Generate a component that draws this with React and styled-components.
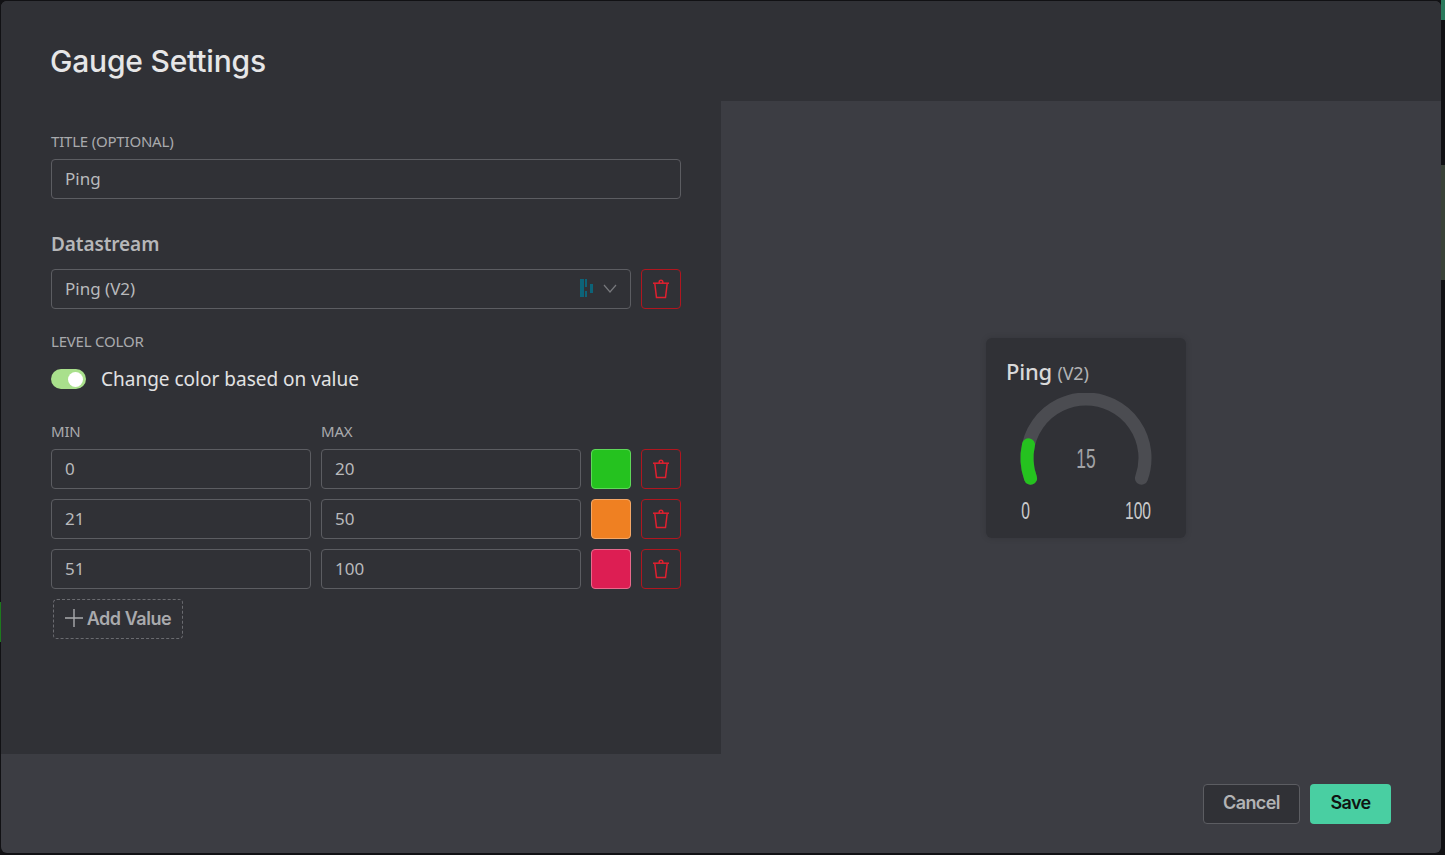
import React from "react";
import styled, { createGlobalStyle } from "styled-components";

const GlobalStyle = createGlobalStyle`
  html, body {
    margin: 0;
    padding: 0;
    background: #111114;
    overflow: hidden;
  }
  * {
    box-sizing: border-box;
  }
`;

const Page = styled.div`
  width: 1445px;
  height: 855px;
  padding: 1px 4px 2px 1px;
  position: relative;
`;

// bits of the page behind the dialog that stick out at its edges
const BehindDialog = styled.div`
  position: absolute;
  top: ${(p) => p.$top}px;
  height: ${(p) => p.$height}px;
  ${(p) => (p.$left ? "left: 0; width: 1px;" : "right: 0; width: 4px;")}
  background: ${(p) => p.$color};
`;

const Modal = styled.div`
  position: relative;
  height: 852px;
  display: grid;
  grid-template-rows: 100px 653px 99px;
  grid-template-columns: 720px 720px;
  background: #3c3d43;
  border-radius: 6px;
  overflow: hidden;
  font-family: "Noto Sans", "Open Sans", sans-serif;
`;

const Header = styled.header`
  grid-column: 1 / 3;
  background: #303136;
  padding: 40px 49px 0;
`;

const Title = styled.h1`
  margin: 0;
  font-family: Inter, "Noto Sans", sans-serif;
  font-size: 30px;
  line-height: 40px;
  font-weight: 500;
  letter-spacing: -0.2px;
  color: #e6e6e7;
`;

const FormPanel = styled.section`
  background: #303136;
  padding: 31px 40px 0 50px;
  display: flex;
  flex-direction: column;
`;

const Label = styled.div`
  font-size: 15px;
  line-height: 18px;
  padding-bottom: 2px;
  letter-spacing: -0.2px;
  color: #a9aaad;
  text-transform: uppercase;
`;

const Field = styled.div`
  height: 40px;
  border: 1px solid #5c5d62;
  border-radius: 4px;
  padding: 0 13px 2px;
  display: flex;
  align-items: center;
  font-size: 17px;
  color: #b9babc;
  flex: ${(p) => (p.$grow ? "1" : "none")};
  width: ${(p) => p.$width || "auto"};
`;

const TitleField = styled(Field)`
  margin-top: 7px;
`;

const SectionHeading = styled.h2`
  margin: 33px 0 13px;
  font-size: 19px;
  line-height: 24px;
  font-weight: 600;
  letter-spacing: -0.1px;
  color: #b6b7b9;
`;

const Row = styled.div`
  display: flex;
  gap: 10px;
  margin-bottom: 10px;
`;

const StreamMeta = styled.span`
  margin-left: auto;
  display: flex;
  align-items: center;
  gap: 10px;
`;

const LevelLabel = styled(Label)`
  margin-top: 13px;
`;

const ToggleRow = styled.div`
  margin-top: 15px;
  display: flex;
  align-items: center;
  gap: 15px;
  font-size: 19px;
  line-height: 24px;
  color: #e2e2e3;
`;

const Track = styled.span`
  width: 35px;
  height: 20px;
  border-radius: 10px;
  background: #a9e08c;
  display: flex;
  align-items: center;
  justify-content: flex-end;
  padding-right: 3px;
`;

const Knob = styled.span`
  width: 15px;
  height: 15px;
  border-radius: 50%;
  background: #fff;
`;

const ColumnLabels = styled.div`
  margin-top: 31px;
  margin-bottom: 7px;
  display: flex;
  gap: 10px;
`;

const ColumnLabel = styled(Label)`
  width: 260px;
`;

const Swatch = styled.div`
  width: 40px;
  height: 40px;
  border-radius: 4px;
  background: ${(p) => p.$color};
  border: 1px solid ${(p) => p.$edge};
`;

const TrashButton = styled.button`
  width: 40px;
  height: 40px;
  padding: 0;
  background: transparent;
  border: 1px solid #b0161f;
  border-radius: 4px;
  display: flex;
  align-items: center;
  justify-content: center;
`;

const AddButton = styled.button`
  width: 130px;
  height: 40px;
  margin-left: 2px;
  border: 1px dashed #6a6b70;
  border-radius: 4px;
  background: transparent;
  display: flex;
  align-items: center;
  justify-content: center;
  gap: 4px;
  padding: 0 0 2px;
  font-family: Inter, "Noto Sans", sans-serif;
  font-size: 18px;
  font-weight: 600;
  letter-spacing: -0.45px;
  color: #a9aaad;
`;

const PreviewPanel = styled.section`
  display: flex;
  align-items: center;
  justify-content: center;
  padding: 21px 0 0 10px;
`;

const GaugeCard = styled.div`
  width: 200px;
  height: 200px;
  border-radius: 6px;
  background: #303136;
  box-shadow: 0 0 6px rgba(0, 0, 0, 0.14);
  padding: 19px 20px 0;
`;

const GaugeTitle = styled.div`
  font-size: 22px;
  font-weight: 500;
  line-height: 28px;
  letter-spacing: -0.2px;
  color: #d9d9da;
`;

const GaugeStream = styled.span`
  font-size: 18px;
  font-weight: 400;
  color: #b2b3b5;
`;

const GaugeBody = styled.div`
  position: relative;
  width: 160px;
  margin-top: 6px;
`;

const GaugeValue = styled.div`
  position: absolute;
  left: 0;
  right: 0;
  top: 50px;
  text-align: center;
  font-family: "Liberation Sans", sans-serif;
  font-size: 28px;
  line-height: 32px;
  color: #a2a3a6;
  transform: scaleX(0.62);
`;

const GaugeScale = styled.div`
  display: flex;
  justify-content: space-between;
  padding: 0 8px 0 13px;
  margin-top: 6px;
  font-family: "Liberation Sans", sans-serif;
  font-size: 24px;
  line-height: 26px;
  color: #c9cacb;
`;

const ScaleValue = styled.span`
  display: inline-block;
  transform: scaleX(0.65);
`;

const Footer = styled.footer`
  grid-column: 1 / 3;
  display: flex;
  justify-content: flex-end;
  gap: 10px;
  padding: 30px 50px 0 0;
`;

const FooterButton = styled.button`
  height: 40px;
  padding: 0 0 4px;
  border-radius: 4px;
  font-family: Inter, "Noto Sans", sans-serif;
  font-size: 18px;
  font-weight: 600;
  letter-spacing: -0.6px;
`;

const CancelButton = styled(FooterButton)`
  width: 97px;
  background: #303136;
  border: 1px solid #5c5d62;
  color: #b2b3b5;
`;

const SaveButton = styled(FooterButton)`
  width: 81px;
  background: #49cfa2;
  border: none;
  color: #101512;
`;

const TrashIcon = () => (
  <svg width="18" height="20" viewBox="0 0 18 20" fill="none" stroke="#e0202f" strokeWidth="1.5">
    <path d="M1 4.2h16" />
    <path d="M2.8 4.5 4.5 18.5h9l1.7-14" />
    <path d="M7.2 4V3a1.8 1.8 0 0 1 3.6 0v1" />
  </svg>
);

const StreamIcon = () => (
  <svg width="13" height="18" viewBox="0 0 13 18" fill="#0d6378">
    <rect x="0" y="0" width="4" height="18" />
    <rect x="5" y="0" width="2" height="8" />
    <rect x="5" y="12" width="2" height="6" />
    <rect x="10" y="5" width="3" height="9" />
  </svg>
);

const ChevronIcon = () => (
  <svg width="14" height="9" viewBox="0 0 14 9" fill="none" stroke="#77787c" strokeWidth="1.2">
    <path d="M1 1l6 7 6-7" />
  </svg>
);

const PlusIcon = () => (
  <svg width="18" height="18" viewBox="0 0 18 18" stroke="#a9aaad" strokeWidth="1.4">
    <path d="M9 0v18M0 9h18" />
  </svg>
);

// 220 degree arc, centre 65/65 radius 59
const polar = (deg) => {
  const a = ((deg - 90) * Math.PI) / 180;
  return [65 + 59 * Math.cos(a), 65 + 59 * Math.sin(a)];
};
const arc = (from, to) => {
  const [x1, y1] = polar(from);
  const [x2, y2] = polar(to);
  const large = to - from > 180 ? 1 : 0;
  return `M${x1.toFixed(2)} ${y1.toFixed(2)}A59 59 0 ${large} 1 ${x2.toFixed(2)} ${y2.toFixed(2)}`;
};

const Gauge = () => (
  <svg width="160" height="94" viewBox="-15 0 160 94" fill="none" strokeWidth="13" strokeLinecap="round">
    <path d={arc(-110, 110)} stroke="#4b4c51" />
    <path d={arc(-110, -77)} stroke="#25c21f" />
  </svg>
);

const ranges = [
  { min: "0", max: "20", color: "#25c21f", edge: "#5fd85a" },
  { min: "21", max: "50", color: "#ef8022", edge: "#f4a868" },
  { min: "51", max: "100", color: "#dd1e53", edge: "#e86a8d" },
];

export default function App() {
  return (
    <>
      <GlobalStyle />
      <Page>
        <BehindDialog $top={0} $height={20} $color="#2a7a5c" />
        <BehindDialog $top={165} $height={115} $color="#3a4238" />
        <BehindDialog $left $top={602} $height={40} $color="#1d7a1d" />
        <Modal>
          <Header>
            <Title>Gauge Settings</Title>
          </Header>
          <FormPanel>
            <Label>Title (optional)</Label>
            <TitleField>Ping</TitleField>
            <SectionHeading>Datastream</SectionHeading>
            <Row>
              <Field $grow>
                Ping (V2)
                <StreamMeta>
                  <StreamIcon />
                  <ChevronIcon />
                </StreamMeta>
              </Field>
              <TrashButton aria-label="Delete">
                <TrashIcon />
              </TrashButton>
            </Row>
            <LevelLabel>Level color</LevelLabel>
            <ToggleRow>
              <Track>
                <Knob />
              </Track>
              Change color based on value
            </ToggleRow>
            <ColumnLabels>
              <ColumnLabel>Min</ColumnLabel>
              <ColumnLabel>Max</ColumnLabel>
            </ColumnLabels>
            {ranges.map((r) => (
              <Row key={r.min}>
                <Field $width="260px">{r.min}</Field>
                <Field $width="260px">{r.max}</Field>
                <Swatch $color={r.color} $edge={r.edge} />
                <TrashButton aria-label="Delete">
                  <TrashIcon />
                </TrashButton>
              </Row>
            ))}
            <AddButton>
              <PlusIcon />
              Add Value
            </AddButton>
          </FormPanel>
          <PreviewPanel>
            <GaugeCard>
              <GaugeTitle>
                Ping <GaugeStream>(V2)</GaugeStream>
              </GaugeTitle>
              <GaugeBody>
                <Gauge />
                <GaugeValue>15</GaugeValue>
              </GaugeBody>
              <GaugeScale>
                <ScaleValue>0</ScaleValue>
                <ScaleValue>100</ScaleValue>
              </GaugeScale>
            </GaugeCard>
          </PreviewPanel>
          <Footer>
            <CancelButton>Cancel</CancelButton>
            <SaveButton>Save</SaveButton>
          </Footer>
        </Modal>
      </Page>
    </>
  );
}
